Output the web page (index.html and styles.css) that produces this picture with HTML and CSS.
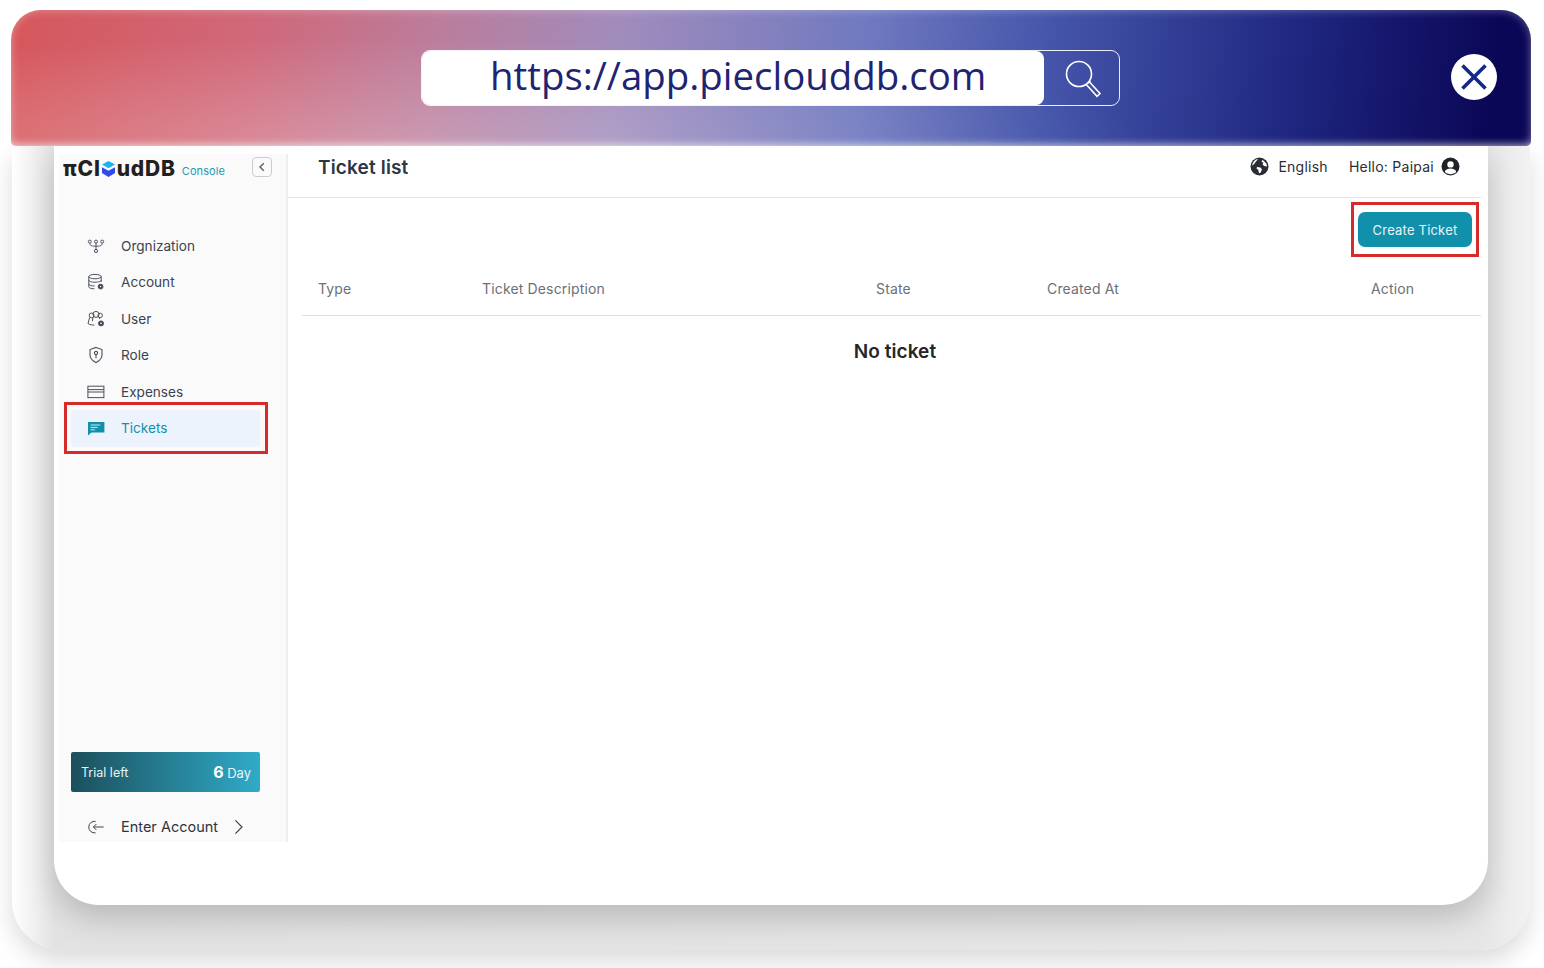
FILE: index.html
```html
<!DOCTYPE html>
<html lang="en">
<head>
  <meta charset="UTF-8">
  <meta name="viewport" content="width=device-width, initial-scale=1.0">
  <title>Ticket list</title>
  <link rel="stylesheet" href="styles.css">
</head>
<body>
  <div class="frame">
    <!-- address bar -->
    <div class="urlbar">
      <div class="search">
        <div class="search-text">https://app.pieclouddb.com</div>
        <div class="search-btn">
          <svg width="40" height="40" viewBox="0 0 40 40" fill="none" stroke="#fff" stroke-width="1.6">
            <circle cx="17" cy="16" r="12.5"/>
            <path d="M25.500 25.500l3-2.500M27 23.500l11 12-3 2.800-11-12"/>
          </svg>
        </div>
      </div>
      <div class="close-btn">
        <svg width="28" height="28" viewBox="0 0 28 28" fill="none" stroke="#14288c" stroke-width="3.6">
          <path d="M2.500 2.500l23 23M25.500 2.500l-23 23"/>
        </svg>
      </div>
    </div>

    <div class="shell">
      <div class="window">
        <div class="sidebar">
          <div class="brand">
            <div class="logo">
              <span>πCl</span><svg class="logo-cube" width="15" height="18" viewBox="0 0 15 18">
                <path d="M7.500 1L14 4.600 7.500 8.200 1 4.600z" fill="#19b5f1"/>
                <path d="M1 7.200l6.500 3.600L14 7.200V13l-6.500 4L1 13z" fill="#2f48f0"/>
              </svg><span>udDB</span>
            </div>
            <div class="console">Console</div>
            <div class="collapse">
              <svg width="8" height="10" viewBox="0 0 8 10" fill="none" stroke="#59606b" stroke-width="1.4"><path d="M5.800 1.200L2 5l3.800 3.800"/></svg>
            </div>
          </div>

          <div class="nav">
            <div class="nav-item">
              <svg class="nav-icon" width="18" height="18" viewBox="0 0 18 18" fill="none" stroke="#4a505c" stroke-width="1">
                <circle cx="2.800" cy="4.600" r="1.500"/><circle cx="9" cy="4.600" r="1.500"/><circle cx="15.200" cy="4.600" r="1.500"/><circle cx="9" cy="14" r="1.600"/>
                <path d="M9 6.200v6.200M2.800 6.200c0 2.600 2.500 3 6.200 3s6.200-.4 6.200-3"/>
              </svg>
              <span>Orgnization</span>
            </div>
            <div class="nav-item">
              <svg class="nav-icon" width="18" height="18" viewBox="0 0 18 18" fill="none" stroke="#4a505c" stroke-width="1">
                <ellipse cx="8" cy="3.600" rx="6.200" ry="2.200"/>
                <path d="M1.800 3.600v10.200c0 1.200 2.600 2 5.600 2M14.200 3.600V9M1.800 7.200c0 1.200 2.800 2 6.200 2s6.200-.8 6.200-2M1.800 11c0 1.200 2.600 2 5.800 2"/>
                <circle cx="13.600" cy="13.600" r="2.400" fill="#3c4350"/><circle cx="13.600" cy="13.600" r=".8" fill="#fff" stroke="none"/>
              </svg>
              <span>Account</span>
            </div>
            <div class="nav-item">
              <svg class="nav-icon" width="18" height="18" viewBox="0 0 18 18" fill="none" stroke="#4a505c" stroke-width="1">
                <circle cx="9" cy="4.400" r="3"/><circle cx="4.600" cy="5.400" r="2.400"/><circle cx="13.200" cy="5.400" r="2.200"/>
                <path d="M2.600 7.500L1 13.600c2 1.200 4.400 1.600 6.400 1.400M6 7.200l-.6 4M12 7l.8 2"/>
                <circle cx="14" cy="13.400" r="2.500" fill="#3c4350"/><circle cx="14" cy="13.400" r=".8" fill="#fff" stroke="none"/>
              </svg>
              <span>User</span>
            </div>
            <div class="nav-item">
              <svg class="nav-icon" width="18" height="18" viewBox="0 0 18 18" fill="none" stroke="#4a505c" stroke-width="1.100">
                <path d="M9 1.400l6 2.200v5.200c0 3.600-2.600 6.200-6 7.800-3.400-1.600-6-4.200-6-7.800V3.600z"/>
                <circle cx="9" cy="7" r="1.600"/><path d="M9 8.600v3.600"/>
              </svg>
              <span>Role</span>
            </div>
            <div class="nav-item">
              <svg class="nav-icon" width="18" height="18" viewBox="0 0 18 18" fill="none" stroke="#4a505c" stroke-width="1">
                <rect x=".9" y="3.200" width="16" height="11.400"/><path d="M.9 6.600h16M.9 9h16"/>
              </svg>
              <span>Expenses</span>
            </div>
            <div class="nav-item nav-active marked">
              <svg class="nav-icon" width="18" height="18" viewBox="0 0 18 18">
                <path d="M1 3h16.400v10.600H4.400L1 16.400z" fill="#1190ac"/>
                <path d="M3.600 6h9.600M3.600 8.400h7M3.600 10.800h4.400" stroke="#cfe7ee" stroke-width="1"/>
              </svg>
              <span>Tickets</span>
            </div>
          </div>

          <div class="trial">
            <span>Trial left</span>
            <span class="trial-days"><b>6</b> Day</span>
          </div>
          <div class="enter">
            <svg class="nav-icon" width="18" height="18" viewBox="0 0 18 18" fill="none" stroke="#3c4350" stroke-width="1">
              <path d="M8.600 3.400a5.800 5.800 0 1 0 0 11.400M16.600 9H6.400M9.400 6L6.400 9l3 3"/>
            </svg>
            <span class="enter-text">Enter Account</span>
            <svg width="10" height="16" viewBox="0 0 10 16" fill="none" stroke="#3c4350" stroke-width="1.200"><path d="M1.400 1.400L8 8l-6.600 6.600"/></svg>
          </div>
        </div>

        <div class="main">
          <div class="header">
            <h1 class="title">Ticket list</h1>
            <div class="header-right">
              <svg width="19" height="19" viewBox="0 0 19 19">
                <circle cx="9.500" cy="9.500" r="9" fill="#2a2d33"/>
                <path d="M2 8.500c1.500-.6 2.600-1.800 3.500-3.500L8 2.200C6 2 3.200 3.800 2 8.500zM7 10l3.500.6 1.500 2-1.500 3.200-1.500.4-.8-3.400L6.500 11.500zM12.500 2.800l3.800 3.600.8 3.200-3-.6-1.600-1.800 1-1.500-2-1z" fill="#fff"/>
              </svg>
              <span class="lang">English</span>
              <span class="hello">Hello: Paipai</span>
              <svg width="19" height="19" viewBox="0 0 19 19">
                <circle cx="9.500" cy="9.500" r="9" fill="#1f2228"/>
                <circle cx="9.500" cy="7.400" r="3.200" fill="#fff"/>
                <path d="M3.800 15c1-2.600 3-3.500 5.700-3.500s4.700.9 5.700 3.500c-1.500 1.400-3.500 2.200-5.700 2.200S5.300 16.400 3.800 15z" fill="#fff"/>
              </svg>
            </div>
          </div>

          <div class="toolbar">
            <button type="button" class="btn marked-btn">Create Ticket</button>
          </div>

          <div class="table-head">
            <div>Type</div>
            <div>Ticket Description</div>
            <div>State</div>
            <div>Created At</div>
            <div>Action</div>
          </div>
          <div class="empty">No ticket</div>
        </div>
      </div>
    </div>
  </div>
</body>
</html>
```

FILE: styles.css
```css
html, body {
  margin: 0;
  height: 968px;
  overflow: hidden;
  background: #fff;
}

body {
  font-family: Inter, "Liberation Sans", sans-serif;
  color: #2d3440;
  padding: 10px 13px 0 11px;
  box-sizing: border-box;
}

.frame {
  position: relative;
  display: flex;
  flex-direction: column;
}

/* address bar */
.urlbar {
  position: relative;
  z-index: 2;
  height: 136px;
  padding: 40px 34px 0 410px;
  box-sizing: border-box;
  display: flex;
  justify-content: space-between;
  border-radius: 30px 30px 5px 5px;
  background:
    radial-gradient(ellipse 800px 110px at 22% 100%, rgba(255, 255, 255, 0.24), rgba(255, 255, 255, 0)),
    linear-gradient(96deg, #d6575b 0%, #d0687a 16%, #bb7d9c 28%, #a08cbc 40%, #7079c0 56%, #4555aa 68%, #1f2780 84%, #0b0757 97%);
  box-shadow: inset 0 0 10px rgba(255, 255, 255, 0.35), inset 0 -6px 10px -6px rgba(255, 255, 255, 0.6);
}

.search {
  width: 699px;
  height: 56px;
  display: flex;
  border-radius: 9px;
  border: 1px solid rgba(255, 255, 255, 0.9);
  box-sizing: border-box;
}

.search-text {
  width: 622px;
  background: #fff;
  border-radius: 8px;
  padding-left: 68px;
  box-sizing: border-box;
  font-family: "Open Sans", sans-serif;
  font-size: 38.4px;
  line-height: 48px;
  color: #1f2472;
}

.search-btn {
  flex: 1;
  display: flex;
  align-items: center;
  justify-content: center;
}

.close-btn {
  width: 46px;
  height: 46px;
  margin-top: 4px;
  border-radius: 50%;
  background: #fff;
  display: flex;
  align-items: center;
  justify-content: center;
}

/* grey frame round the window */
.shell {
  height: 804px;
  margin: 0 1px;
  padding: 0 42px;
  box-sizing: border-box;
  border-radius: 0 0 50px 50px;
  background: linear-gradient(90deg, #ffffff 0%, #e2e2e2 2.800%, #e6e6e6 97%, #f2f2f2 100%);
  box-shadow: 0 12px 24px rgba(0, 0, 0, 0.14);
  overflow: hidden;
}

.window {
  height: 759px;
  display: flex;
  align-items: flex-start;
  padding: 0 7px 0 5px;
  box-sizing: border-box;
  background: #fff;
  border-radius: 0 0 45px 45px;
  box-shadow: 0 14px 30px rgba(0, 0, 0, 0.18);
}

/* left menu */
.sidebar {
  width: 229px;
  height: 688px;
  margin-top: 8px;
  flex-shrink: 0;
  display: flex;
  flex-direction: column;
  box-sizing: border-box;
  background: #fafafa;
  border-right: 2px solid #eee;
}

.brand {
  height: 28px;
  margin-top: 3px;
  padding-left: 4px;
  display: flex;
  align-items: flex-start;
}

.logo {
  display: flex;
  align-items: center;
  height: 22px;
  font-weight: 800;
  font-size: 21px;
  letter-spacing: 0.8px;
  color: #231f20;
}

.logo-cube {
  margin: 1px 1px 0 0;
}

.console {
  margin: 7px 0 0 6px;
  font-size: 11px;
  letter-spacing: 0.1px;
  color: #1a9ab5;
}

.collapse {
  width: 20px;
  height: 20px;
  margin-left: auto;
  margin-right: 14px;
  box-sizing: border-box;
  border: 1px solid #c9ccd2;
  border-radius: 4px;
  display: flex;
  align-items: center;
  justify-content: center;
}

.nav {
  margin-top: 42.5px;
  display: flex;
  flex-direction: column;
}

.nav-item {
  position: relative;
  width: 189px;
  height: 36.5px;
  margin-left: 12px;
  padding-left: 16px;
  box-sizing: border-box;
  display: flex;
  align-items: center;
  gap: 16px;
  font-size: 13.6px;
  color: #3c4350;
}

.nav-active {
  background: #edf3fc;
  border-radius: 4px;
  color: #1190ac;
}

/* red marks laid over the screenshot */
.marked::after {
  content: "";
  position: absolute;
  inset: -8px -8px -7px -7px;
  border: 3px solid #d52b2b;
}

.trial {
  width: 189px;
  height: 40px;
  margin: auto 0 20px 12px;
  padding: 0 9px 0 10px;
  box-sizing: border-box;
  display: flex;
  align-items: center;
  justify-content: space-between;
  border-radius: 2px;
  background: linear-gradient(90deg, #1c4f5c 0%, #2fabc8 100%);
  color: #e9f4f6;
  font-size: 12.5px;
}

.trial-days {
  font-size: 13px;
}

.trial-days b {
  font-size: 16px;
  color: #fff;
}

.enter {
  height: 30px;
  padding-bottom: 1px;
  box-sizing: border-box;
  margin-left: 28px;
  display: flex;
  align-items: center;
  font-size: 14.5px;
  color: #2d3440;
}

.enter-text {
  margin: 0 16px 0 16px;
}

/* right part */
.main {
  flex: 1;
  min-width: 0;
}

.header {
  height: 52px;
  padding: 0 21px 10px 30px;
  box-sizing: border-box;
  display: flex;
  align-items: center;
  justify-content: space-between;
  border-bottom: 1px solid #e3e5e8;
}

.title {
  margin: 1px 0 0;
  font-size: 19px;
  font-weight: 600;
  letter-spacing: 0.15px;
  color: #2d3642;
}

.header-right {
  display: flex;
  align-items: center;
  font-size: 14px;
  letter-spacing: 0.25px;
  color: #2a2d33;
}

.lang {
  margin: 0 21px 0 9px;
}

.hello {
  margin-right: 7px;
}

.toolbar {
  padding: 14px 9px 0 0;
  display: flex;
  justify-content: flex-end;
}

.btn {
  position: relative;
  width: 114px;
  height: 35px;
  padding: 0;
  border: 0;
  border-radius: 7px;
  background: #1190ac;
  color: #e8f5f8;
  font-family: inherit;
  font-size: 13px;
  letter-spacing: 0.2px;
  cursor: pointer;
}

.marked-btn::after {
  content: "";
  position: absolute;
  inset: -10px -7px;
  border: 3px solid #d52b2b;
}

.table-head {
  margin: 24px 0 0 14px;
  height: 45px;
  padding: 0 0 9px 16px;
  box-sizing: border-box;
  display: grid;
  grid-template-columns: 164px 394px 171px 324px 1fr;
  align-items: center;
  font-size: 14px;
  letter-spacing: 0.15px;
  color: #6b7078;
  border-bottom: 1px solid #dcdfe3;
}

.empty {
  margin: 24px 0 0 21px;
  text-align: center;
  font-size: 19px;
  font-weight: 600;
  letter-spacing: 0.05px;
  color: #23262b;
}
```
